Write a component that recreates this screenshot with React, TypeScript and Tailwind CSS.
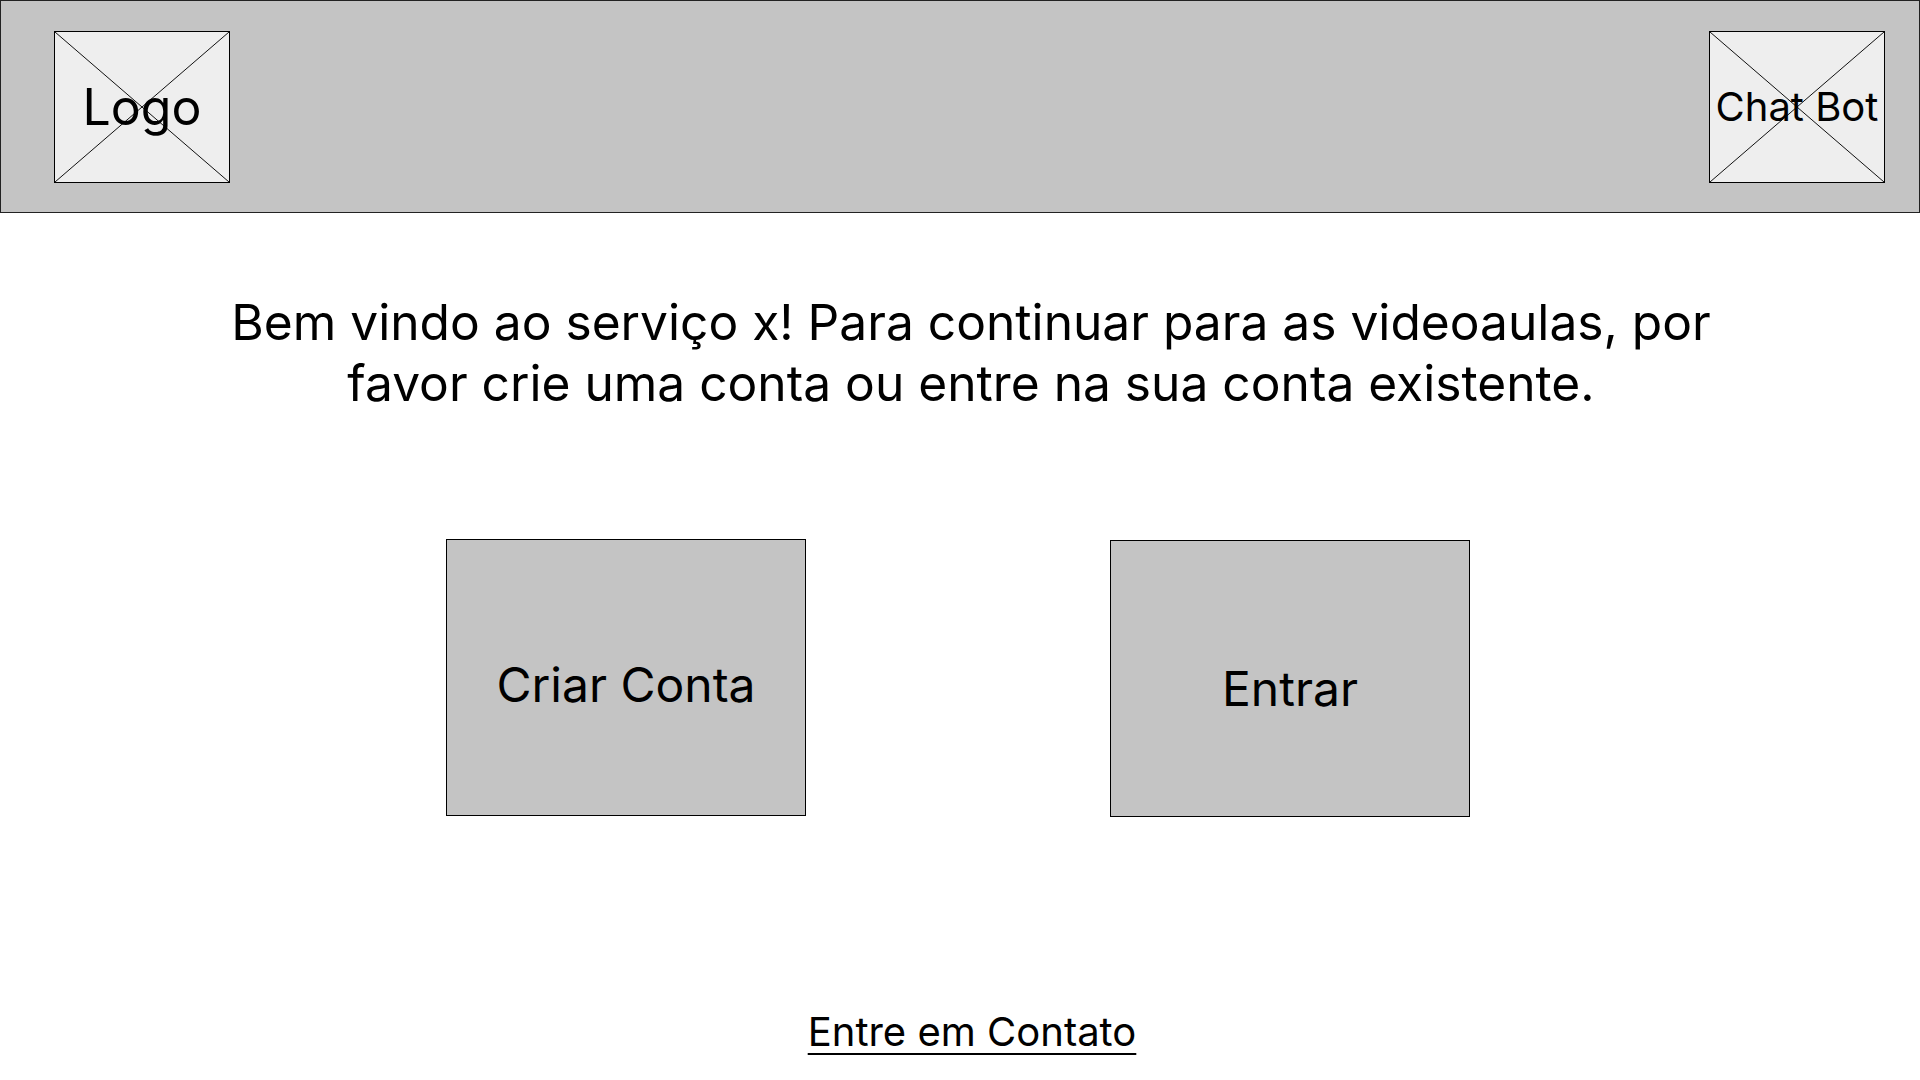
const inter = "font-['Inter','Noto_Sans',sans-serif]";

function Placeholder({ label, textClass }: { label: string; textClass: string }) {
  return (
    <div className="relative w-[176px] h-[152px] border border-black bg-[#eeeeee] flex items-center justify-center">
      <svg className="absolute inset-0 w-full h-full" viewBox="0 0 174 150" preserveAspectRatio="none">
        <line x1="0" y1="0" x2="174" y2="150" stroke="#111" strokeWidth="1" />
        <line x1="174" y1="0" x2="0" y2="150" stroke="#111" strokeWidth="1" />
      </svg>
      <span className={`relative text-black whitespace-nowrap leading-none ${textClass}`}>{label}</span>
    </div>
  );
}

export default function App() {
  return (
    <div className={`w-[1920px] h-[1080px] bg-white ${inter} text-black overflow-hidden flex flex-col`}>
      <header className="h-[213px] bg-[#c4c4c4] border border-[#222] flex items-center justify-between pl-[53px] pr-[34px]">
        <Placeholder label="Logo" textClass="text-[50px]" />
        <Placeholder label="Chat Bot" textClass="text-[40px]" />
      </header>

      <main className="flex flex-col items-center">
        <p className="mt-[79px] text-[49.7px] leading-[61px] text-center w-[1600px] pl-[22px]">
          Bem vindo ao serviço x! Para continuar para as videoaulas, por
          <br />
          favor crie uma conta ou entre na sua conta existente.
        </p>

        <div className="mt-[125px] flex items-start gap-[304px] pr-[4px]">
          <button className="w-[360px] h-[277px] bg-[#c4c4c4] border border-black flex items-center justify-center pt-[15px] text-[48px]">
            Criar Conta
          </button>
          <button className="mt-px w-[360px] h-[277px] bg-[#c4c4c4] border border-black flex items-center justify-center pt-[20px] text-[48px]">
            Entrar
          </button>
        </div>

        <a href="#" className="mt-[191px] ml-[24px] text-[40px] leading-[48px] underline decoration-2 underline-offset-[7px]">
          Entre em Contato
        </a>
      </main>
    </div>
  );
}
